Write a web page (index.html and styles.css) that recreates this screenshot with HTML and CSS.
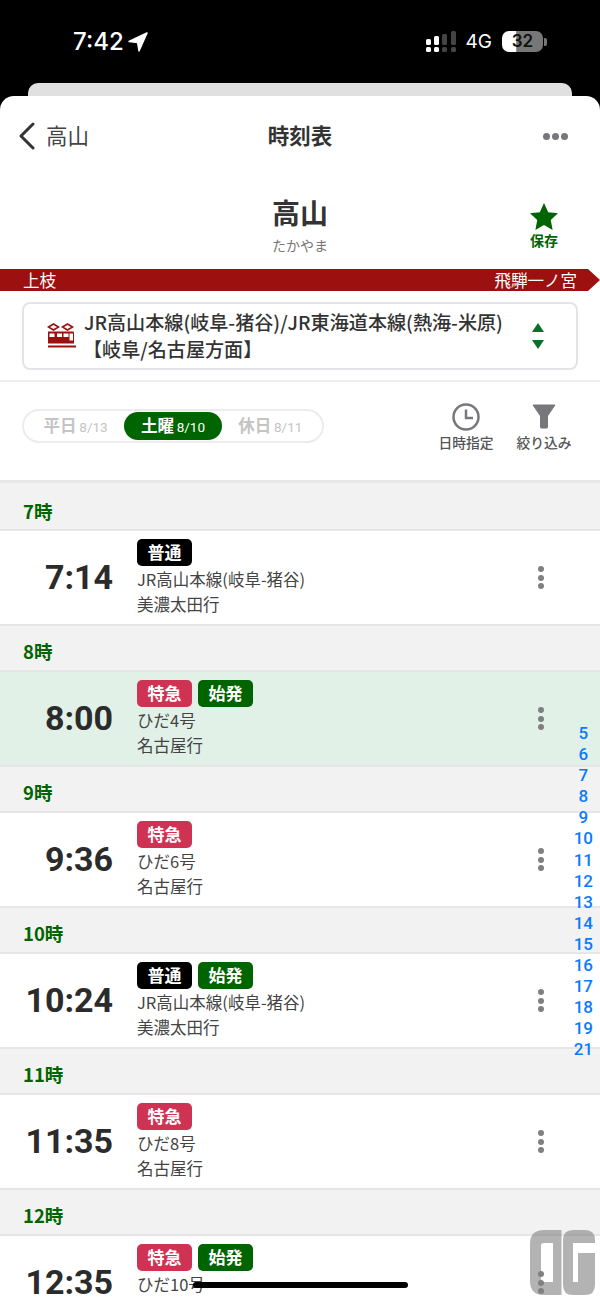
FILE: index.html

```html
<!DOCTYPE html>
<html lang="ja">
<head>
  <meta charset="UTF-8" />
  <meta name="viewport" content="width=device-width, initial-scale=1.0" />
  <title>時刻表</title>
  <link rel="stylesheet" href="styles.css">
</head>
<body>
  <div class="phone">
    <div class="status">
      <div class="clock">7:42
        <svg class="loc" width="20" height="20" viewBox="0 0 20 20"><path d="M19 1 1 9.500 9.600 10.400 11 19z" fill="#fff" stroke="#fff" stroke-width="1.500" stroke-linejoin="round"/></svg>
      </div>
      <div class="status-right">
        <svg width="30" height="22" viewBox="0 0 30 22">
          <rect x="0" y="8" width="5" height="6" rx="1.500" fill="#fff"/>
          <rect x="0" y="16" width="5" height="5" rx="1.500" fill="#fff"/>
          <rect x="8" y="5" width="5" height="9" rx="1.500" fill="#fff"/>
          <rect x="8" y="16" width="5" height="5" rx="1.500" fill="#fff"/>
          <rect x="16" y="3" width="5" height="11" rx="1.500" fill="#444"/>
          <rect x="16" y="16" width="5" height="5" rx="1.500" fill="#444"/>
          <rect x="25" y="0" width="5" height="14" rx="1.500" fill="#444"/>
          <rect x="25" y="16" width="5" height="5" rx="1.500" fill="#444"/>
        </svg>
        <span class="net">4G</span>
        <div class="battery"><span>32</span></div>
        <div class="battery-tip"></div>
      </div>
    </div>
    <div class="back-sheet"></div>

    <div class="sheet">
      <div class="nav">
        <div class="nav-back">
          <svg width="18" height="28" viewBox="0 0 18 28"><path d="M15 2 3 14l12 12" fill="none" stroke="#333" stroke-width="3" stroke-linecap="round" stroke-linejoin="round"/></svg>
          <span>高山</span>
        </div>
        <div class="nav-title">時刻表</div>
        <div class="nav-more"><i></i><i></i><i></i></div>
      </div>

      <div class="station">
        <div class="station-name">高山</div>
        <div class="station-kana">たかやま</div>
        <div class="save">
          <svg width="28" height="27" viewBox="0 0 24 23"><path d="M12 0l3.600 7.800 8.400 1-6.200 5.800 1.600 8.400L12 18.800 4.600 23l1.600-8.400L0 8.800l8.400-1z" fill="#006400"/></svg>
          <span>保存</span>
        </div>
      </div>

      <div class="stops">
        <span>上枝</span>
        <span>飛騨一ノ宮</span>
      </div>

      <div class="line-box">
        <svg class="train" width="30" height="26" viewBox="0 0 30 26">
          <path d="M1.500 4 6.500 1l5 3-5 3zM15.500 4l5-3 5 3-5 3z" fill="none" stroke="#9c1010" stroke-width="1.600"/>
          <path d="M1 8.500h25a1 1 0 0 1 1 1v11H1z" fill="#9c1010"/>
          <rect x="2.500" y="10.500" width="5" height="3.500" fill="#fff"/>
          <rect x="10" y="10.500" width="5" height="3.500" fill="#fff"/>
          <rect x="16.500" y="10.500" width="5" height="3.500" fill="#fff"/>
          <rect x="22.500" y="10.500" width="3.500" height="7" fill="#fff"/>
          <rect x="1" y="22.500" width="28" height="2" fill="#9c1010"/>
        </svg>
        <div class="line-name">JR高山本線(岐阜-猪谷)/JR東海道本線(熱海-米原)<br><span class="dir">【岐阜/名古屋方面】</span></div>
        <div class="arrows"><i class="up"></i><i class="down"></i></div>
      </div>

      <div class="controls">
        <div class="tabs">
          <div class="tab">平日 <small>8/13</small></div>
          <div class="tab on">土曜 <small>8/10</small></div>
          <div class="tab">休日 <small>8/11</small></div>
        </div>
        <div class="tools">
          <div class="tool">
            <svg width="30" height="30" viewBox="0 0 30 30"><circle cx="15" cy="15" r="12.500" fill="none" stroke="#77777c" stroke-width="2.500"/><path d="M15 7.500V16h7" fill="none" stroke="#77777c" stroke-width="2.500"/></svg>
            <span>日時指定</span>
          </div>
          <div class="tool">
            <svg width="30" height="30" viewBox="0 0 30 30"><path d="M4 3h22L18.500 14v11a1 1 0 0 1-1 1h-5a1 1 0 0 1-1-1V14z" fill="#77777c" stroke="#77777c" stroke-linejoin="round"/></svg>
            <span>絞り込み</span>
          </div>
        </div>
      </div>

      <div class="list">
        <div class="hour first">7時</div>
        <div class="row">
          <div class="time">7:14</div>
          <div class="info">
            <div class="badges"><span class="badge local">普通</span></div>
            <div class="train-name">JR高山本線(岐阜-猪谷)</div>
            <div class="dest">美濃太田行</div>
          </div>
          <div class="menu"><i></i><i></i><i></i></div>
        </div>

        <div class="hour">8時</div>
        <div class="row next">
          <div class="time">8:00</div>
          <div class="info">
            <div class="badges"><span class="badge express">特急</span><span class="badge start">始発</span></div>
            <div class="train-name">ひだ4号</div>
            <div class="dest">名古屋行</div>
          </div>
          <div class="menu"><i></i><i></i><i></i></div>
        </div>

        <div class="hour">9時</div>
        <div class="row">
          <div class="time">9:36</div>
          <div class="info">
            <div class="badges"><span class="badge express">特急</span></div>
            <div class="train-name">ひだ6号</div>
            <div class="dest">名古屋行</div>
          </div>
          <div class="menu"><i></i><i></i><i></i></div>
        </div>

        <div class="hour">10時</div>
        <div class="row">
          <div class="time">10:24</div>
          <div class="info">
            <div class="badges"><span class="badge local">普通</span><span class="badge start">始発</span></div>
            <div class="train-name">JR高山本線(岐阜-猪谷)</div>
            <div class="dest">美濃太田行</div>
          </div>
          <div class="menu"><i></i><i></i><i></i></div>
        </div>

        <div class="hour">11時</div>
        <div class="row">
          <div class="time">11:35</div>
          <div class="info">
            <div class="badges"><span class="badge express">特急</span></div>
            <div class="train-name">ひだ8号</div>
            <div class="dest">名古屋行</div>
          </div>
          <div class="menu"><i></i><i></i><i></i></div>
        </div>

        <div class="hour">12時</div>
        <div class="row">
          <div class="time">12:35</div>
          <div class="info">
            <div class="badges"><span class="badge express">特急</span><span class="badge start">始発</span></div>
            <div class="train-name">ひだ10号</div>
          </div>
          <div class="menu"><i></i><i></i><i></i></div>
        </div>
      </div>
    </div>

    <div class="index">
      <span>5</span><span>6</span><span>7</span><span>8</span><span>9</span><span>10</span><span>11</span><span>12</span>
      <span>13</span><span>14</span><span>15</span><span>16</span><span>17</span><span>18</span><span>19</span><span>21</span>
    </div>

    <svg class="mark" width="66" height="65" viewBox="0 0 66 65">
      <path d="M0 14Q0 0 14 0H31.500V65H14Q0 65 0 51ZM11 16Q11 13 14 13H23V52H14Q11 52 11 49Z" fill="#808080" fill-opacity=".6" fill-rule="evenodd"/>
      <path d="M33 10Q33 0 43 0H55Q65 0 65 10V13H43V52H48V23H65V55Q65 65 55 65H43Q33 65 33 55Z" fill="#808080" fill-opacity=".6"/>
    </svg>
    <div class="home-bar"></div>
  </div>
</body>
</html>
```

FILE: styles.css

```css
* {
  box-sizing: border-box;
}
body {
  margin: 0;
  font-family: "Noto Sans CJK JP", "Noto Sans", sans-serif;
  color: #333;
  background: #000;
}
.phone {
  position: relative;
  width: 600px;
  height: 1300px;
  overflow: hidden;
  background: #000;
}

/* status bar */
.status {
  display: flex;
  justify-content: space-between;
  align-items: center;
  height: 83px;
  padding: 0 53px 0 73px;
  color: #fff;
}
.clock {
  display: flex;
  align-items: center;
  gap: 4px;
  font-family: Inter, sans-serif;
  font-size: 24px;
  font-weight: 500;
}
.status-right {
  display: flex;
  align-items: center;
}
.net {
  margin: 0 10px 0 10px;
  font-family: Inter, sans-serif;
  font-size: 19px;
}
.battery {
  width: 41px;
  height: 21px;
  border-radius: 7px;
  background: linear-gradient(to right, #fff 33%, #777 36%);
  color: #111;
  font-family: Inter, sans-serif;
  font-size: 17px;
  font-weight: 600;
  line-height: 21px;
  text-align: center;
}
.battery-tip {
  width: 3px;
  height: 8px;
  margin-left: 1px;
  border-radius: 0 2px 2px 0;
  background: #777;
}
.back-sheet {
  height: 13px;
  margin: 0 28px;
  border-radius: 10px 10px 0 0;
  background: #e0e0e0;
}
.sheet {
  border-radius: 14px 14px 0 0;
  background: #fff;
  overflow: hidden;
}

/* nav */
.nav {
  display: flex;
  justify-content: space-between;
  align-items: center;
  height: 80px;
  padding: 0 18px;
}
.nav-back {
  display: flex;
  align-items: center;
  gap: 10px;
  width: 110px;
  font-size: 21.500px;
  color: #444;
}
.nav-back span {
  margin-top: -4px;
}
.nav-title {
  font-size: 21.500px;
  font-weight: 700;
  margin-top: -3px;
}
.nav-more {
  display: flex;
  justify-content: flex-end;
  gap: 2px;
  width: 110px;
  padding-right: 14px;
}
.nav-more i {
  width: 7px;
  height: 7px;
  border-radius: 50%;
  background: #77777c;
}

/* station */
.station {
  position: relative;
  height: 93px;
  padding-top: 16px;
  text-align: center;
}
.station-name {
  font-size: 28px;
  font-weight: 700;
  line-height: 40px;
}
.station-kana {
  font-size: 14px;
  line-height: 20px;
  margin-top: 3px;
  color: #777;
}
.save {
  position: absolute;
  top: 27px;
  right: 42px;
  display: flex;
  flex-direction: column;
  align-items: center;
  font-size: 14px;
  font-weight: 700;
  color: #006400;
}
.stops {
  display: flex;
  justify-content: space-between;
  align-items: center;
  height: 22px;
  padding: 0 23px;
  background: #9c1010;
  color: #fff;
  font-size: 16.500px;
  clip-path: polygon(0 0, 588px 0, 600px 50%, 588px 100%, 0 100%);
}
.line-box {
  display: flex;
  align-items: center;
  height: 68px;
  margin: 11px 22px 0;
  padding: 0 32px 0 23px;
  border: 2px solid #e4e4e8;
  border-radius: 8px;
}
.train {
  flex: none;
  margin-right: 7px;
}
.line-name {
  flex: 1;
  font-size: 19.100px;
  font-weight: 500;
  line-height: 27px;
  white-space: nowrap;
}
.dir {
  margin-left: -1px;
}
.arrows {
  display: flex;
  flex-direction: column;
  gap: 8px;
}
.arrows i {
  width: 0;
  height: 0;
  border-left: 6px solid transparent;
  border-right: 6px solid transparent;
}
.arrows .up {
  border-bottom: 9px solid #0b6e2a;
}
.arrows .down {
  border-top: 9px solid #0b6e2a;
}

/* day tabs and tools */
.controls {
  display: flex;
  justify-content: space-between;
  align-items: flex-start;
  height: 100px;
  margin-top: 10px;
  padding: 27px 28px 0 22px;
  border-top: 2px solid #eee;
}
.tabs {
  display: flex;
  align-items: center;
  justify-content: space-between;
  width: 302px;
  height: 34px;
  padding: 0 3px;
  border: 2px solid #ececec;
  border-radius: 17px;
}
.tab {
  width: 98px;
  height: 28px;
  border-radius: 14px;
  color: #c4c4c4;
  font-size: 16.500px;
  font-weight: 700;
  line-height: 27px;
  text-align: center;
  white-space: nowrap;
}
.tab small {
  margin-left: -1px;
  font-size: 13.500px;
  font-weight: 400;
  font-family: Roboto, sans-serif;
}
.tab.on {
  background: #006400;
  color: #fff;
}
.tools {
  display: flex;
  gap: 22px;
  margin-top: -7px;
}
.tool {
  display: flex;
  flex-direction: column;
  align-items: center;
  width: 56px;
  color: #555;
  font-size: 13.800px;
  font-weight: 500;
  line-height: 18px;
  white-space: nowrap;
}
.tool svg {
  margin-bottom: 1px;
}

/* timetable */
.list {
  border-top: 3px solid #e8e8e8;
  background: #f2f2f2;
}
.hour {
  display: flex;
  align-items: flex-end;
  height: 46px;
  padding: 0 23px 7px;
  border-bottom: 2px solid #e6e6e6;
  color: #006400;
  font-size: 18.500px;
  font-weight: 700;
  line-height: 24px;
}
.hour.first {
  height: 48px;
  padding-bottom: 6px;
}
.row {
  display: flex;
  align-items: center;
  height: 95px;
  padding-right: 56px;
  border-bottom: 2px solid #e6e6e6;
  background: #fff;
}
.row.next {
  background: #e1f1e8;
}
.time {
  flex: none;
  width: 113px;
  margin-right: 24px;
  font-family: Roboto, sans-serif;
  font-size: 34px;
  font-weight: 700;
  color: #2b2b2b;
  text-align: right;
  margin-top: -1px;
}
.info {
  flex: 1;
  align-self: flex-start;
  padding-top: 8px;
}
.badges {
  display: flex;
  gap: 6px;
  margin-bottom: 1px;
}
.badge {
  width: 55px;
  height: 27px;
  border-radius: 5px;
  color: #fff;
  font-size: 17px;
  font-weight: 700;
  line-height: 26px;
  text-align: center;
}
.badge.local {
  background: #000;
}
.badge.express {
  background: #cf3354;
}
.badge.start {
  background: #006400;
}
.train-name,
.dest {
  font-size: 16.500px;
  line-height: 25px;
  color: #444;
  white-space: nowrap;
}
.menu {
  display: flex;
  flex-direction: column;
  gap: 2.500px;
}
.menu i {
  width: 6px;
  height: 6px;
  border-radius: 50%;
  background: #808080;
}

/* overlays */
.index {
  position: absolute;
  top: 723px;
  right: 7px;
  display: flex;
  flex-direction: column;
  align-items: center;
  color: #0a7aff;
  font-family: Roboto, sans-serif;
  font-size: 17px;
  font-weight: 500;
  line-height: 21.100px;
}
.mark {
  position: absolute;
  top: 1230px;
  left: 530px;
}
.home-bar {
  position: absolute;
  top: 1282px;
  left: 193px;
  width: 215px;
  height: 6px;
  border-radius: 3px;
  background: #000;
}
```
